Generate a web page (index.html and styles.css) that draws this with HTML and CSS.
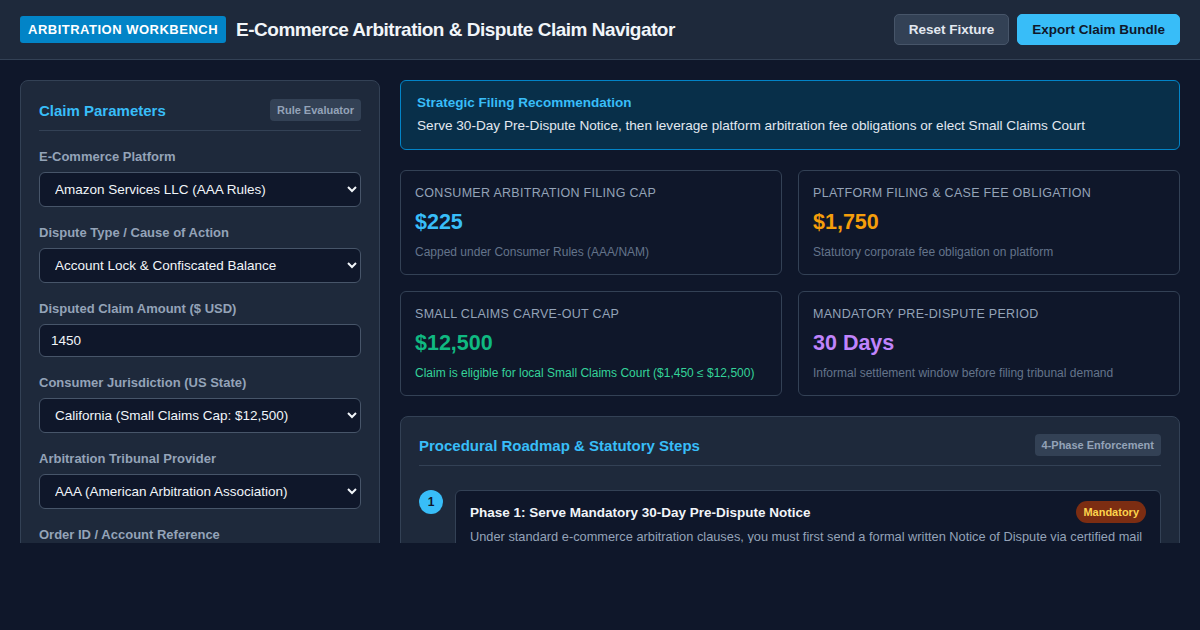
FILE: index.html
```html
<!DOCTYPE html>
<html lang="en">
<head>
  <meta charset="UTF-8" />
  <meta name="viewport" content="width=device-width, initial-scale=1.0" />
  <title>E-Commerce Arbitration &amp; Dispute Claim Navigator</title>
  <link rel="stylesheet" href="styles.css">
</head>
<body>

  <header class="topbar">
    <div class="brand">
      <span class="brand-tag">Arbitration Workbench</span>
      <h1>E-Commerce Arbitration &amp; Dispute Claim Navigator</h1>
    </div>
    <div class="actions">
      <button class="btn btn-ghost">Reset Fixture</button>
      <button class="btn btn-primary">Export Claim Bundle</button>
    </div>
  </header>

  <main class="workspace">

    <!-- Claim inputs -->
    <section class="panel params">
      <div class="panel-head">
        <h2>Claim Parameters</h2>
        <span class="chip">Rule Evaluator</span>
      </div>

      <label class="field">
        <span>E-Commerce Platform</span>
        <select>
          <option>Amazon Services LLC (AAA Rules)</option>
          <option>eBay Inc. (AAA Rules)</option>
          <option>Shopify Inc. (JAMS Rules)</option>
        </select>
      </label>

      <label class="field">
        <span>Dispute Type / Cause of Action</span>
        <select>
          <option>Account Lock &amp; Confiscated Balance</option>
          <option>Non-Delivery of Goods</option>
          <option>Unauthorized Charges</option>
        </select>
      </label>

      <label class="field">
        <span>Disputed Claim Amount ($ USD)</span>
        <input type="text" value="1450">
      </label>

      <label class="field">
        <span>Consumer Jurisdiction (US State)</span>
        <select>
          <option>California (Small Claims Cap: $12,500)</option>
          <option>New York (Small Claims Cap: $10,000)</option>
          <option>Texas (Small Claims Cap: $20,000)</option>
        </select>
      </label>

      <label class="field">
        <span>Arbitration Tribunal Provider</span>
        <select>
          <option>AAA (American Arbitration Association)</option>
          <option>JAMS</option>
          <option>NAM (National Arbitration &amp; Mediation)</option>
        </select>
      </label>

      <label class="field">
        <span>Order ID / Account Reference</span>
        <input type="text" value="112-4839201-5582910">
      </label>
    </section>

    <!-- Results -->
    <div class="results">

      <div class="recommend">
        <h3>Strategic Filing Recommendation</h3>
        <p>Serve 30-Day Pre-Dispute Notice, then leverage platform arbitration fee obligations or elect Small Claims Court</p>
      </div>

      <div class="stats">
        <div class="stat">
          <div class="stat-label">Consumer Arbitration Filing Cap</div>
          <div class="stat-value blue">$225</div>
          <div class="stat-note">Capped under Consumer Rules (AAA/NAM)</div>
        </div>
        <div class="stat">
          <div class="stat-label">Platform Filing &amp; Case Fee Obligation</div>
          <div class="stat-value amber">$1,750</div>
          <div class="stat-note">Statutory corporate fee obligation on platform</div>
        </div>
        <div class="stat">
          <div class="stat-label">Small Claims Carve-Out Cap</div>
          <div class="stat-value green">$12,500</div>
          <div class="stat-note ok">Claim is eligible for local Small Claims Court ($1,450 ≤ $12,500)</div>
        </div>
        <div class="stat">
          <div class="stat-label">Mandatory Pre-Dispute Period</div>
          <div class="stat-value purple">30 Days</div>
          <div class="stat-note">Informal settlement window before filing tribunal demand</div>
        </div>
      </div>

      <section class="panel roadmap">
        <div class="panel-head">
          <h2>Procedural Roadmap &amp; Statutory Steps</h2>
          <span class="chip">4-Phase Enforcement</span>
        </div>

        <div class="step">
          <div class="step-num">1</div>
          <div class="step-body">
            <div class="step-top">
              <h4>Phase 1: Serve Mandatory 30-Day Pre-Dispute Notice</h4>
              <span class="pill">Mandatory</span>
            </div>
            <p>Under standard e-commerce arbitration clauses, you must first send a formal written Notice of Dispute via certified mail to the platform's registered agent before filing a demand.</p>
          </div>
        </div>

        <div class="step">
          <div class="step-num">2</div>
          <div class="step-body">
            <div class="step-top">
              <h4>Phase 2: File Demand for Arbitration</h4>
              <span class="pill">Filing</span>
            </div>
            <p>Submit the demand and consumer filing fee to the tribunal provider.</p>
          </div>
        </div>
      </section>

    </div>
  </main>

</body>
</html>
```

FILE: styles.css
```css
* {
  box-sizing: border-box;
}

body {
  margin: 0;
  height: 630px;
  overflow: hidden;
  font-family: "Liberation Sans", Arial, sans-serif;
  background: #0f172a;
  color: #e2e8f0;
}

/* header */
.topbar {
  height: 60px;
  display: flex;
  align-items: center;
  justify-content: space-between;
  padding: 0 20px;
  background: #1e293b;
  border-bottom: 1px solid #334155;
}

.brand {
  display: flex;
  align-items: center;
  gap: 10px;
}

.brand-tag {
  background: #0284c7;
  color: #fff;
  font-size: 13px;
  font-weight: bold;
  text-transform: uppercase;
  letter-spacing: 0.5px;
  padding: 6px 8px;
  border-radius: 3px;
}

.brand h1 {
  margin: 0;
  font-size: 19px;
  font-weight: bold;
  letter-spacing: -0.5px;
  color: #f1f5f9;
}

.actions {
  display: flex;
  gap: 8px;
}

.btn {
  font-family: inherit;
  font-size: 13.5px;
  font-weight: bold;
  height: 31px;
  padding: 0 14px;
  border-radius: 5px;
  cursor: pointer;
}

.btn-ghost {
  background: #334155;
  border: 1px solid #475569;
  color: #e2e8f0;
}

.btn-primary {
  background: #38bdf8;
  border: 1px solid #38bdf8;
  color: #0f172a;
}

/* layout */
.workspace {
  height: 483px;
  overflow: hidden;
  padding: 20px 20px 0;
  display: grid;
  grid-template-columns: 360px 1fr;
  gap: 20px;
  align-items: start;
}

.panel {
  background: #1e293b;
  border: 1px solid #334155;
  border-radius: 8px;
  padding: 18px 18px 20px;
}

.panel-head {
  display: flex;
  align-items: center;
  justify-content: space-between;
  padding-bottom: 9px;
  border-bottom: 1px solid #334155;
  margin-bottom: 18px;
}

.panel-head h2 {
  margin: 0;
  font-size: 15px;
  color: #38bdf8;
}

.chip {
  background: #334155;
  color: #94a3b8;
  font-size: 11px;
  font-weight: bold;
  padding: 5px 7px;
  border-radius: 4px;
}

/* form */
.field {
  display: block;
  margin-bottom: 18px;
}

.field span {
  display: block;
  font-size: 13px;
  line-height: 15px;
  font-weight: bold;
  color: #94a3b8;
  margin-bottom: 8px;
}

.field select,
.field input {
  width: 100%;
  font-family: inherit;
  font-size: 13.5px;
  color: #f1f5f9;
  background: #0f172a;
  border: 1px solid #475569;
  border-radius: 6px;
}

.field select {
  height: 35px;
  padding: 0 8px 0 11px;
}

.field input {
  height: 33px;
  padding: 0 11px;
}

/* results */
.results {
  display: flex;
  flex-direction: column;
  gap: 20px;
}

.recommend {
  background: #082f49;
  border: 1px solid #0284c7;
  border-radius: 6px;
  padding: 14px 16px 16px;
}

.recommend h3 {
  margin: 0 0 8px;
  font-size: 13.5px;
  color: #38bdf8;
}

.recommend p {
  margin: 0;
  font-size: 13.6px;
  color: #e2e8f0;
}

.stats {
  display: grid;
  grid-template-columns: 1fr 1fr;
  gap: 16px;
}

.stat {
  background: #0f172a;
  border: 1px solid #334155;
  border-radius: 6px;
  padding: 15px 14px 15px;
}

.stat-label {
  font-size: 12.5px;
  text-transform: uppercase;
  letter-spacing: 0.3px;
  color: #94a3b8;
}

.stat-value {
  font-size: 21.5px;
  font-weight: bold;
  margin: 10px 0 10px;
}

.blue { color: #38bdf8; }
.amber { color: #f59e0b; }
.green { color: #10b981; }
.purple { color: #c084fc; }

.stat-note {
  font-size: 12px;
  color: #64748b;
}

.stat-note.ok {
  color: #34d399;
}

/* roadmap */
.roadmap {
  padding-top: 17px;
}

.roadmap .panel-head {
  margin-bottom: 24px;
}

.step {
  display: flex;
  gap: 12px;
  margin-bottom: 14px;
}

.step-num {
  flex: none;
  width: 24px;
  height: 24px;
  border-radius: 50%;
  background: #38bdf8;
  color: #0f172a;
  font-size: 12px;
  font-weight: bold;
  display: flex;
  align-items: center;
  justify-content: center;
}

.step-body {
  flex: 1;
  background: #0f172a;
  border: 1px solid #334155;
  border-radius: 6px;
  padding: 10px 14px 12px;
}

.step-top {
  display: flex;
  align-items: center;
  justify-content: space-between;
}

.step-top h4 {
  margin: 0;
  font-size: 13.5px;
  color: #f1f5f9;
}

.pill {
  background: #7c2d12;
  color: #fcd34d;
  font-size: 11px;
  font-weight: bold;
  padding: 5px 7px;
  border-radius: 12px;
}

.step-body p {
  margin: 4px 0 0;
  font-size: 12.8px;
  line-height: 1.5;
  color: #94a3b8;
}
```
